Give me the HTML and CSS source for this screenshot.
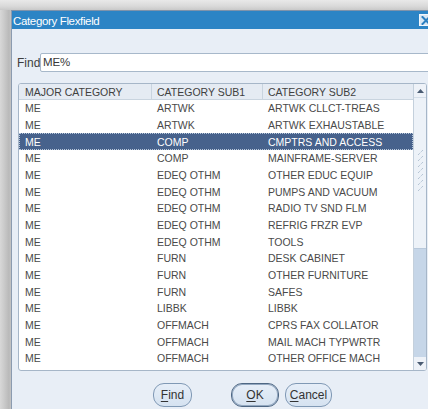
FILE: index.html
```html
<!DOCTYPE html>
<html>
<head>
<meta charset="utf-8">
<title>Category Flexfield</title>
<link rel="stylesheet" href="styles.css">
</head>
<body>
<div class="desk">
  <div class="dialog">
    <div class="titlebar">
      <span class="title">Category Flexfield</span>
      <span class="close">
        <svg width="10" height="9" viewBox="0 0 10 9"><path d="M1.5 1 L8.5 8 M8.5 1 L1.5 8" stroke="#2b7fc0" stroke-width="2" stroke-linecap="square"/></svg>
      </span>
    </div>
    <div class="content">
      <div class="find-row">
        <label class="find-label">Find</label>
        <div class="find-input">ME%</div>
      </div>
      <div class="table">
        <div class="grid">
          <div class="row head">
            <div class="cell">MAJOR CATEGORY</div>
            <div class="cell">CATEGORY SUB1</div>
            <div class="cell">CATEGORY SUB2</div>
          </div>
          <div class="row"><div class="cell">ME</div><div class="cell">ARTWK</div><div class="cell">ARTWK CLLCT-TREAS</div></div>
          <div class="row"><div class="cell">ME</div><div class="cell">ARTWK</div><div class="cell">ARTWK EXHAUSTABLE</div></div>
          <div class="row selected"><div class="cell">ME</div><div class="cell">COMP</div><div class="cell">CMPTRS AND ACCESS</div></div>
          <div class="row"><div class="cell">ME</div><div class="cell">COMP</div><div class="cell">MAINFRAME-SERVER</div></div>
          <div class="row"><div class="cell">ME</div><div class="cell">EDEQ OTHM</div><div class="cell">OTHER EDUC EQUIP</div></div>
          <div class="row"><div class="cell">ME</div><div class="cell">EDEQ OTHM</div><div class="cell">PUMPS AND VACUUM</div></div>
          <div class="row"><div class="cell">ME</div><div class="cell">EDEQ OTHM</div><div class="cell">RADIO TV SND FLM</div></div>
          <div class="row"><div class="cell">ME</div><div class="cell">EDEQ OTHM</div><div class="cell">REFRIG FRZR EVP</div></div>
          <div class="row"><div class="cell">ME</div><div class="cell">EDEQ OTHM</div><div class="cell">TOOLS</div></div>
          <div class="row"><div class="cell">ME</div><div class="cell">FURN</div><div class="cell">DESK CABINET</div></div>
          <div class="row"><div class="cell">ME</div><div class="cell">FURN</div><div class="cell">OTHER FURNITURE</div></div>
          <div class="row"><div class="cell">ME</div><div class="cell">FURN</div><div class="cell">SAFES</div></div>
          <div class="row"><div class="cell">ME</div><div class="cell">LIBBK</div><div class="cell">LIBBK</div></div>
          <div class="row"><div class="cell">ME</div><div class="cell">OFFMACH</div><div class="cell">CPRS FAX COLLATOR</div></div>
          <div class="row"><div class="cell">ME</div><div class="cell">OFFMACH</div><div class="cell">MAIL MACH TYPWRTR</div></div>
          <div class="row"><div class="cell">ME</div><div class="cell">OFFMACH</div><div class="cell">OTHER OFFICE MACH</div></div>
        </div>
        <div class="scrollbar">
          <div class="sb-btn">
            <svg width="7" height="4" viewBox="0 0 7 4"><path d="M0 4 L3.5 0 L7 4 Z" fill="#4a5b72"/></svg>
          </div>
          <div class="sb-thumb">
            <svg width="9" height="42" viewBox="0 0 9 42" class="grip">
              <g stroke="#9fb2c6" stroke-width="1" stroke-dasharray="1 1">
                <path d="M2 6 L7 1"/><path d="M2 12 L7 7"/><path d="M2 18 L7 13"/>
                <path d="M2 24 L7 19"/><path d="M2 30 L7 25"/><path d="M2 36 L7 31"/>
                <path d="M2 42 L7 37"/>
              </g>
            </svg>
          </div>
          <div class="sb-track"></div>
          <div class="sb-btn">
            <svg width="7" height="4" viewBox="0 0 7 4"><path d="M0 0 L7 0 L3.5 4 Z" fill="#4a5b72"/></svg>
          </div>
        </div>
      </div>
      <div class="buttons">
        <button class="btn btn-find"><u>F</u>ind</button>
        <button class="btn btn-ok"><u>O</u>K</button>
        <button class="btn btn-cancel"><u>C</u>ancel</button>
      </div>
    </div>
  </div>
</div>
</body>
</html>
```
FILE: styles.css
```css
html, body {
  margin: 0;
  padding: 0;
}

body {
  width: 428px;
  height: 409px;
  overflow: hidden;
  font-family: "Liberation Sans", Arial, sans-serif;
  background:
    linear-gradient(180deg, #e9e9e9 0, #dadada 6px, #c9c9c9 10px, transparent 10px),
    linear-gradient(90deg, #d8d8d8 0, #cbcbcb 4px, #b9b9b9 9px, #c4c4c4 11px);
}

.desk {
  padding: 10px 0 0 11px;
  height: 409px;
  box-sizing: border-box;
  overflow: hidden;
}

.dialog {
  width: 424px;
  height: 399px;
  background: #e8eef6;
  border-left: 1px solid #8b9bb0;
  border-top: 1px solid #7f93ab;
  box-sizing: border-box;
}

/* title bar */
.titlebar {
  height: 18px;
  background: #2c84c5;
  display: flex;
  align-items: center;
  justify-content: space-between;
  color: #ffffff;
}

.title {
  font-size: 11.5px;
  letter-spacing: -0.35px;
  padding-left: 1px;
  padding-top: 1px;
}

.close {
  width: 12px;
  height: 10px;
  margin-right: 2px;
  background: #d8e6f3;
  border: 1px solid #f2f7fc;
  display: flex;
  align-items: center;
  justify-content: center;
}

/* dialog body */
.content {
  padding: 24px 0 0 5px;
}

.find-row {
  display: flex;
  align-items: center;
  height: 19px;
}

.find-label {
  font-size: 12px;
  color: #3e3e3e;
  width: 23px;
}

.find-input {
  flex: 1;
  height: 19px;
  box-sizing: border-box;
  background: #ffffff;
  border: 1px solid #a7b8ca;
  border-radius: 2px;
  font-size: 11.5px;
  color: #383838;
  padding: 2px 0 0 2px;
  letter-spacing: -0.1px;
}

/* list of values */
.table {
  margin: 11px 0 0 1px;
  width: 409px;
  height: 288px;
  box-sizing: border-box;
  border: 1px solid #a6b6c8;
  border-radius: 3px;
  background: #ffffff;
  display: flex;
  overflow: hidden;
}

.grid {
  width: 394px;
  font-size: 10.5px;
  color: #4a4a4a;
}

.row {
  display: grid;
  grid-template-columns: 133px 111px 150px;
  height: 16.667px;
  align-items: center;
}

.cell {
  padding-left: 5px;
  white-space: nowrap;
  overflow: hidden;
}

.cell:first-child {
  padding-left: 6px;
}

.row.head {
  height: 16px;
  box-sizing: border-box;
  background: #e5ebf3;
  border-bottom: 1px solid #c9d4df;
  color: #404040;
}

.row.head .cell {
  height: 100%;
  display: flex;
  align-items: center;
  box-sizing: border-box;
}

.row.head .cell:not(:last-child) {
  border-right: 1px solid #c9d4df;
}

.row.selected {
  background: #47628c;
  color: #ffffff;
  outline: 1px dotted #b9c8db;
  outline-offset: -1px;
}

/* vertical scrollbar */
.scrollbar {
  width: 13px;
  box-sizing: border-box;
  border-left: 1px solid #c4d0dc;
  display: flex;
  flex-direction: column;
  background: #e9eef5;
}

.sb-btn {
  height: 13px;
  display: flex;
  align-items: center;
  justify-content: center;
  background: #eef2f8;
}

.sb-thumb {
  height: 152px;
  box-sizing: border-box;
  background: #edf2f8;
  border-top: 1px solid #d3dde8;
  border-bottom: 1px solid #b9c9db;
  display: flex;
  justify-content: center;
  padding-top: 51px;
}

.sb-track {
  flex: 1;
  background: #c6d6e8;
}

/* action buttons */
.buttons {
  display: flex;
  padding-left: 136px;
  margin-top: 12px;
}

.btn {
  height: 24px;
  box-sizing: border-box;
  border: 1px solid #8099b5;
  border-radius: 11px;
  background: linear-gradient(180deg, #e6eef8 0, #d5e2f0 100%);
  font-family: "Liberation Sans", Arial, sans-serif;
  font-size: 12px;
  color: #333333;
  padding: 0;
}

.btn u {
  text-decoration-thickness: 1px;
  text-underline-offset: 2px;
}

.btn-find {
  width: 39px;
}

.btn-ok {
  width: 48px;
  margin-left: 39px;
  border-color: #4e6784;
  box-shadow: inset 0 0 0 1px #93a8c0;
}

.btn-cancel {
  width: 47px;
  margin-left: 6px;
}
```
